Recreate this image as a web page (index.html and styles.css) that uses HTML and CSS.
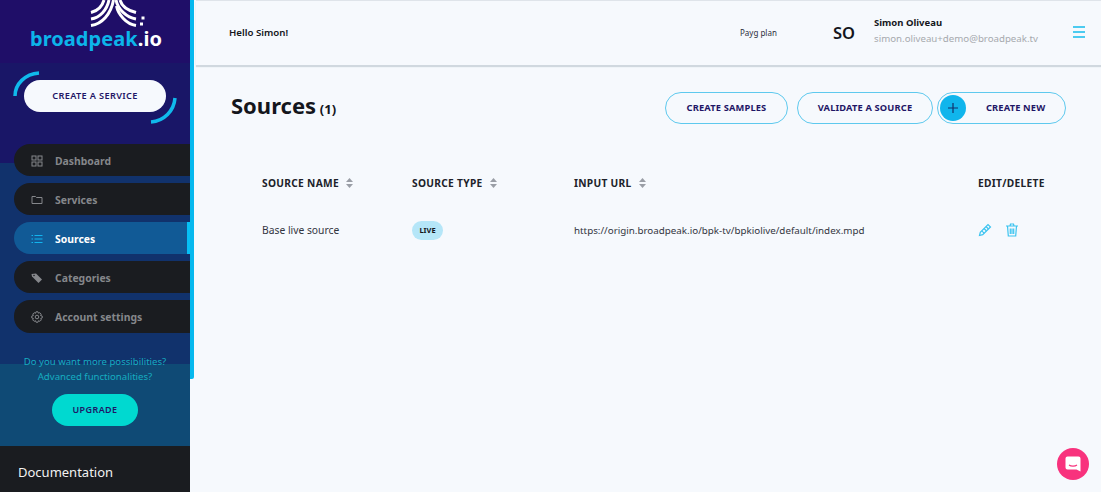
FILE: index.html
```html
<!DOCTYPE html>
<html lang="en">
<head>
<meta charset="utf-8">
<title>Sources</title>
<link rel="stylesheet" href="styles.css">
</head>
<body>
<div class="app">
  <aside class="sidebar">
    <div class="logo">
      <svg class="logo-mark" width="60" height="30" viewBox="0 0 60 30" fill="none" stroke="#fff" stroke-width="3">
        <path d="M1 12.500C7 11 12 7 14 0"/>
        <path d="M1 19C10 17.500 17 10 19 0"/>
        <path d="M1 25.500C12 24 21 14 23.500 0"/>
        <path d="M46 12.500C40 11 32 7 30 0"/>
        <path d="M46 19C37 17.500 28 10 26 0"/>
        <path d="M46 25.500C36 24 28 14 26.500 6"/>
        <rect x="51.500" y="16.500" width="3" height="3" fill="#fff" stroke="none"/>
        <rect x="50" y="22.500" width="3" height="3" fill="#fff" stroke="none"/>
      </svg>
      <div class="wordmark">broadpeak<span class="wordmark-io">.io</span></div>
    </div>
    <div class="create-wrap">
      <svg class="create-arcs" width="164" height="54" viewBox="0 0 164 54" fill="none" stroke="#10b9ec" stroke-width="3.500">
        <path d="M2 25C2 13 12 3 26 2"/>
        <path d="M162 27C161 40 151 50 138 51"/>
      </svg>
      <a class="create-btn">CREATE A SERVICE</a>
    </div>
    <nav class="nav">
      <a class="nav-item">
        <svg class="nav-icon" viewBox="0 0 12 12" fill="none" stroke="currentColor"><rect x="1" y="1" width="4" height="4"/><rect x="7" y="1" width="4" height="4"/><rect x="1" y="7" width="4" height="4"/><rect x="7" y="7" width="4" height="4"/></svg>
        <span>Dashboard</span>
      </a>
      <a class="nav-item">
        <svg class="nav-icon" viewBox="0 0 12 12" fill="none" stroke="currentColor"><path d="M1 9.500V2.500H4.500L5.500 3.500H11V9.500Z"/></svg>
        <span>Services</span>
      </a>
      <a class="nav-item nav-active">
        <svg class="nav-icon" viewBox="0 0 12 12" fill="none" stroke="currentColor"><path d="M0.500 2.500H2M3.500 2.500H11.500M0.500 6H2M3.500 6H11.500M0.500 9.500H2M3.500 9.500H11.500"/></svg>
        <span>Sources</span>
      </a>
      <a class="nav-item">
        <svg class="nav-icon" viewBox="0 0 12 12" fill="currentColor"><path d="M0.500 2L5 1.500L11 7.500L7.500 11L1 4.500Z"/><circle cx="3" cy="3.500" r="0.800" fill="#1a1c20"/></svg>
        <span>Categories</span>
      </a>
      <a class="nav-item">
        <svg class="nav-icon" viewBox="0 0 12 12" fill="none" stroke="currentColor"><circle cx="6" cy="6" r="1.800"/><path d="M5 0.800H7L7.400 2.200L8.800 1.700L10.200 3.200L9.500 4.500L11.200 5V7L9.700 7.500L10.300 8.900L8.900 10.300L7.500 9.700L7 11.200H5L4.500 9.700L3.100 10.300L1.700 8.900L2.400 7.500L0.800 7V5L2.400 4.500L1.800 3.100L3.200 1.700L4.500 2.300Z"/></svg>
        <span>Account settings</span>
      </a>
    </nav>
    <div class="promo">
      <p class="promo-text">Do you want more possibilities?<br>Advanced functionalities?</p>
      <a class="upgrade-btn">UPGRADE</a>
    </div>
    <div class="docs">Documentation</div>
  </aside>
  <div class="rail"></div>
  <main class="main">
    <header class="topbar">
      <div class="hello">Hello Simon!</div>
      <div class="plan">Payg plan</div>
      <div class="initials">SO</div>
      <div class="user">
        <div class="user-name">Simon Oliveau</div>
        <div class="user-mail">simon.oliveau+demo@broadpeak.tv</div>
      </div>
      <div class="burger"><i></i><i></i><i></i></div>
    </header>
    <section class="title-row">
      <h1 class="title">Sources <small>(1)</small></h1>
      <div class="actions">
        <a class="btn btn-samples">CREATE SAMPLES</a>
        <a class="btn btn-validate">VALIDATE A SOURCE</a>
        <a class="btn btn-new"><span class="plus"><svg width="12" height="12" viewBox="0 0 12 12" stroke="#12306a" stroke-width="1.200"><path d="M6 1V11M1 6H11"/></svg></span>CREATE NEW</a>
      </div>
    </section>
    <section class="table">
      <div class="th">SOURCE NAME <svg class="sort" width="7" height="10" viewBox="0 0 7 10" fill="#9a9ea6"><path d="M3.500 0L7 4H0ZM0 6H7L3.500 10Z"/></svg></div>
      <div class="th">SOURCE TYPE <svg class="sort" width="7" height="10" viewBox="0 0 7 10" fill="#9a9ea6"><path d="M3.500 0L7 4H0ZM0 6H7L3.500 10Z"/></svg></div>
      <div class="th">INPUT URL <svg class="sort" width="7" height="10" viewBox="0 0 7 10" fill="#9a9ea6"><path d="M3.500 0L7 4H0ZM0 6H7L3.500 10Z"/></svg></div>
      <div class="th">EDIT/DELETE</div>
      <div class="td td-name">Base live source</div>
      <div class="td"><span class="pill">LIVE</span></div>
      <div class="td">https://origin.broadpeak.io/bpk-tv/bpkiolive/default/index.mpd</div>
      <div class="td td-icons">
        <svg width="14" height="14" viewBox="0 0 14 14" fill="none" stroke="#3cc4f0" stroke-width="1.200"><path d="M1.500 12.500L2.300 9.300L10 1.500L12.500 4L4.700 11.700Z"/><path d="M3.800 7.800L6.300 10.300M6 5.500L8.500 8M8 3.500L10.500 6"/></svg>
        <svg width="14" height="14" viewBox="0 0 14 14" fill="none" stroke="#3cc4f0" stroke-width="1.200"><path d="M1 3H13M5 3L5.500 1H8.500L9 3M2.500 3L3.300 13H10.700L11.500 3M5.300 5.500V11M7 5.500V11M8.700 5.500V11"/></svg>
      </div>
    </section>
  </main>
</div>
<a class="chat">
  <svg width="18" height="18" viewBox="0 0 18 18"><path d="M3.500 1.500H14.500A2 2 0 0 1 16.500 3.500V16.500L12.500 14.500H3.500A2 2 0 0 1 1.500 12.500V3.500A2 2 0 0 1 3.500 1.500Z" fill="#fff"/><path d="M5 10C7 11.500 11 11.500 13 10" fill="none" stroke="#f8327d" stroke-width="1.100"/></svg>
</a>
</body>
</html>
```
FILE: styles.css
```css
* { box-sizing: border-box; }
html, body { margin: 0; height: 100%; overflow: hidden; }
body { font-family: "Noto Sans", "Open Sans", sans-serif; background: #f6f9fd; color: #1a1c20; }
a { display: block; }
.app { display: flex; height: 492px; }

.sidebar {
  width: 190px;
  flex: none;
  height: 492px;
  display: flex;
  flex-direction: column;
  background: linear-gradient(#1f0e68 0, #1f0e68 63px, #191667 63px, #191667 163px, #11326c 163px, #11326c 364px, #0f4a75 364px, #0f4a75 100%);
}
.rail { width: 4px; height: 379px; flex: none; background: #06b8ee; border-radius: 0 0 2px 0; }
.logo { height: 63px; position: relative; }
.logo-mark { display: block; margin-left: 90px; }
.wordmark {
  margin: -2px 0 0 30px;
  font-size: 20px;
  line-height: 22px;
  font-weight: 700;
  letter-spacing: 0.050px;
  color: #0cb4ea;
}
.wordmark-io { color: #fff; }

.create-wrap { position: relative; margin: 17px 0 0 24px; width: 142px; height: 32px; }
.create-arcs { position: absolute; left: -11px; top: -9px; }
.create-btn {
  height: 32px;
  border-radius: 16px;
  background: #f6f9fd;
  color: #1f1666;
  font-size: 9.200px;
  font-weight: 600;
  line-height: 32px;
  text-align: center;
  letter-spacing: 0.350px;
  position: relative;
}

.nav { margin: 32px 0 0 14px; display: flex; flex-direction: column; gap: 7px; }
.nav-item {
  height: 32px;
  border-radius: 16px 0 0 16px;
  background: #1a1c20;
  color: #85878b;
  display: flex;
  align-items: center;
  padding: 1px 0 0 17px;
  font-size: 10.400px;
  font-weight: 700;
}
.nav-item:last-child { height: 33px; }
.nav-icon { width: 12px; height: 12px; margin-right: 12px; flex: none; }
.nav-active { background: #115a96; color: #fff; border-right: 3px solid #06c0f5; }
.nav-active .nav-icon { color: #12b4ee; }

.promo { margin-top: 21px; display: flex; flex-direction: column; align-items: center; }
.promo-text { margin: 0; color: #16adc0; font-size: 9.600px; line-height: 15px; text-align: center; }
.upgrade-btn {
  margin-top: 10px;
  width: 86px;
  height: 32px;
  border-radius: 16px;
  background: #00d9d0;
  color: #1f1666;
  font-size: 9px;
  font-weight: 600;
  line-height: 32px;
  text-align: center;
  letter-spacing: 0.400px;
}
.docs {
  margin-top: auto;
  height: 46px;
  background: #1a1c20;
  color: #f2f2f2;
  font-size: 13px;
  line-height: 52px;
  padding-left: 18px;
}

.main { flex: 1; min-width: 0; padding-left: 2px; }
.topbar {
  height: 65px;
  border-top: 1px solid #dfe4ea;
  box-shadow: 0 2px 1px #d0d8df;
  display: flex;
  align-items: center;
  padding: 0 16px 2px 33px;
}
.hello { font-size: 9.700px; font-weight: 600; width: 511px; color: #14161c; }
.plan { font-size: 8px; width: 93px; color: #2b2e3a; }
.initials { font-size: 16.500px; font-weight: 600; width: 41px; color: #14161c; }
.user { width: 199px; }
.user-name { font-size: 9.500px; font-weight: 700; line-height: 14px; color: #14161c; margin-top: -2px; }
.user-mail { font-size: 9.700px; line-height: 14px; margin-top: 2px; color: #a6a9ae; }
.burger { display: flex; flex-direction: column; gap: 3px; width: 12px; }
.burger i { display: block; height: 2px; background: #4ccbf0; }

.title-row { display: flex; justify-content: space-between; align-items: center; height: 32px; margin-top: 27px; padding: 0 35px; }
.title { margin: -2px 0 0; font-size: 22px; font-weight: 700; line-height: 32px; word-spacing: -2px; color: #14161c; }
.title small { font-size: 13px; font-weight: 700; }
.actions { display: flex; }
.btn {
  height: 32px;
  border: 1px solid #5ec9ee;
  border-radius: 16px;
  font-size: 9.300px;
  font-weight: 700;
  line-height: 30px;
  color: #1f1666;
  text-align: center;
  letter-spacing: 0.150px;
}
.btn-samples { width: 123px; margin-right: 9px; }
.btn-validate { width: 136px; margin-right: 4px; }
.btn-new { width: 129px; display: flex; align-items: center; padding: 0 0 0 2px; }
.plus {
  width: 26px; height: 26px; border-radius: 50%;
  background: #10b5ec;
  display: flex; align-items: center; justify-content: center;
  margin-right: 20px;
}

.table {
  margin-top: 46px;
  padding-left: 66px;
  display: grid;
  grid-template-columns: 150px 162px 404px 90px;
  grid-template-rows: 26px 68px;
  align-items: center;
}
.th { font-size: 10.200px; font-weight: 700; color: #20222a; letter-spacing: 0.300px; display: flex; align-items: center; gap: 7px; white-space: nowrap; }
.td { font-size: 9.800px; color: #33353f; white-space: nowrap; }
.td-name { font-size: 10.300px; }
.pill {
  display: inline-block; width: 31px; height: 19px;
  border-radius: 10px; background: #b5e6f8;
  font-size: 7.500px; font-weight: 700; line-height: 19px; text-align: center;
  color: #14161c;
}
.td-icons { display: flex; gap: 13px; }

.chat {
  position: absolute; left: 1057px; top: 448px;
  width: 32px; height: 32px; border-radius: 50%;
  background: #f8327d;
  display: flex; align-items: center; justify-content: center;
}
```
